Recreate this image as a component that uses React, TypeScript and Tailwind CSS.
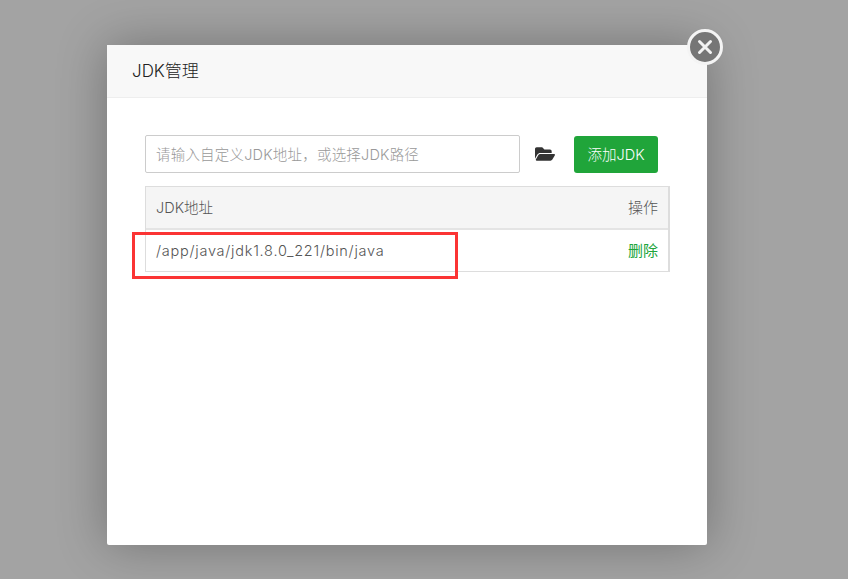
import { FaFolderOpen } from 'react-icons/fa';

const font = "font-['Inter','Noto_Sans_CJK_SC',sans-serif]";

export default function App() {
  return (
    <div className={`h-[579px] w-[848px] overflow-hidden bg-[#a3a3a3] pl-[107px] pt-[45px] ${font}`}>
      <div className="relative h-[500px] w-[600px] rounded-[2px] bg-white shadow-[0_0_50px_rgba(0,0,0,0.3)]">
        {/* close button */}
        <button className="absolute right-[-16px] top-[-16px] flex h-[36px] w-[36px] items-center justify-center rounded-full border-[3px] border-[#f4f4f4] bg-[#767676]">
          <svg width="18" height="18" viewBox="0 0 18 18" fill="none" stroke="#f2f2f2" strokeWidth="3" strokeLinecap="round">
            <path d="M3.5 3.5l11 11M14.5 3.5l-11 11" />
          </svg>
        </button>

        <div className="flex h-[53px] items-center border-b border-[#eeeeee] bg-[#f8f8f8] pl-[25px] pt-[2px] text-[17px] font-light text-[#222]">
          JDK管理
        </div>

        <div className="pl-[38px] pt-[37px]">
          <div className="flex h-[38px] items-center">
            <div className="flex h-[38px] w-[375px] items-center rounded-[2px] border border-[#cccccc] pl-[10px] pt-[1px] text-[14.5px] font-light tracking-[0.2px] text-[#999]">
              请输入自定义JDK地址，或选择JDK路径
            </div>
            <FaFolderOpen className="ml-[15px] text-[20px] text-[#333]" />
            <button className="ml-[19px] mt-[1px] h-[37px] w-[84px] rounded-[3px] bg-[#20a53a] text-[14.5px] font-light text-white">
              添加JDK
            </button>
          </div>

          <div className="mt-[13px] w-[525px] border border-r-2 border-[#dddddd] text-[14.5px] font-light text-[#555]">
            <div className="flex h-[43px] items-center justify-between border-b-2 border-[#e4e4e4] bg-[#f5f5f5] pl-[10px] pr-[10px]">
              <span>JDK地址</span>
              <span className="pt-[1px] text-[15px]">操作</span>
            </div>
            <div className="flex h-[41px] items-center justify-between pl-[10px] pr-[10px]">
              <span className="tracking-[0.75px]">/app/java/jdk1.8.0_221/bin/java</span>
              <span className="pt-[1px] text-[15px] font-normal text-[#20a53a]">删除</span>
            </div>
          </div>
        </div>

        {/* red annotation */}
        <div className="absolute left-[25px] top-[187px] h-[47px] w-[326px] border-[3px] border-[#fb3434]" />
      </div>
    </div>
  );
}
